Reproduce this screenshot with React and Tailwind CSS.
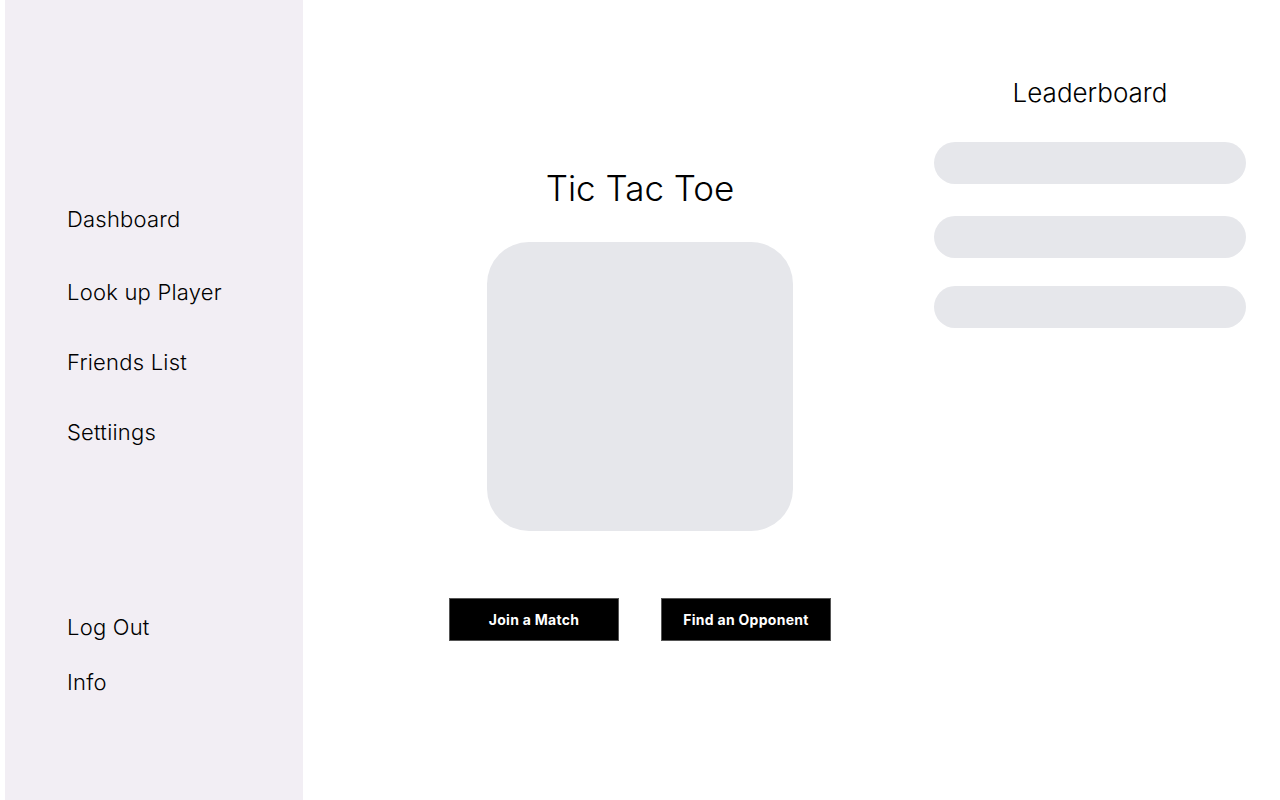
import React from "react";

const navTop = [
  { label: "Dashboard", mt: "mt-[204px]" },
  { label: "Look up Player", mt: "mt-[43px]" },
  { label: "Friends List", mt: "mt-[40px]" },
  { label: "Settiings", mt: "mt-[40px]" },
];

const App = () => {
  return (
    <div
      className="flex h-[800px] w-[1280px] bg-white text-black"
      style={{ fontFamily: "Inter, 'Open Sans', sans-serif" }}
    >
      {/* Sidebar */}
      <aside className="ml-[5px] flex h-full w-[298px] flex-col bg-[#f2eef4] pl-[62px]">
        {navTop.map((item) => (
          <a
            key={item.label}
            className={`${item.mt} block text-[22px] font-light leading-[30px] tracking-[0.01em]`}
          >
            {item.label}
          </a>
        ))}
        <a className="mt-[165px] block text-[22px] font-light leading-[30px] tracking-[0.01em]">
          Log Out
        </a>
        <a className="mt-[25px] block text-[22px] font-light leading-[30px] tracking-[0.01em]">
          Info
        </a>
      </aside>

      {/* Game */}
      <main className="ml-[137px] flex w-[400px] flex-col items-center">
        <h1 className="mt-[166px] text-[35px] font-light leading-[44px]">
          Tic Tac Toe
        </h1>
        <div className="mt-[32px] h-[289px] w-[306px] rounded-[42px] bg-[#e6e7eb]" />
        <div className="mt-[67px] flex gap-[42px]">
          <button className="h-[43px] w-[170px] border border-[#555] bg-black text-[14px] font-bold tracking-[0.02em] text-white">
            Join a Match
          </button>
          <button className="h-[43px] w-[170px] border border-[#555] bg-black text-[14px] font-bold tracking-[0.02em] text-white">
            Find an Opponent
          </button>
        </div>
      </main>

      {/* Leaderboard */}
      <section className="ml-[94px] flex w-[312px] flex-col items-center">
        <h2 className="mt-[75px] text-[26px] font-light leading-[36px]">
          Leaderboard
        </h2>
        <div className="mt-[31px] h-[42px] w-full rounded-full bg-[#e6e7eb]" />
        <div className="mt-[32px] h-[42px] w-full rounded-full bg-[#e6e7eb]" />
        <div className="mt-[28px] h-[42px] w-full rounded-full bg-[#e6e7eb]" />
      </section>
    </div>
  );
};

export default App;
